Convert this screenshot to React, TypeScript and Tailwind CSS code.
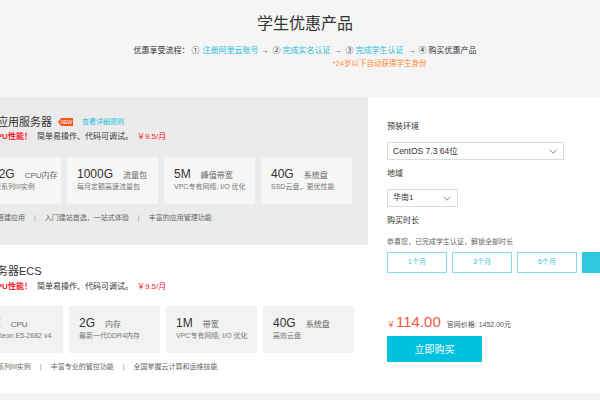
import React from "react";

const Chevron = () => (
  <svg width="8" height="5" viewBox="0 0 8 5" className="shrink-0">
    <polyline points="0.5,0.8 4,4.2 7.5,0.8" fill="none" stroke="#777" strokeWidth="0.9" />
  </svg>
);

type Spec = { big: string; label: string; sub: string; pl?: string };

const SpecCard = ({ s, bg }: { s: Spec; bg: string }) => (
  <div className={`w-[91px] h-[47px] shrink-0 pt-[10px] ${s.pl ?? "pl-[10px]"} ${bg}`}>
    <div className="flex items-baseline h-[14px] whitespace-nowrap">
      <span className="text-[12px] leading-[14px] text-[#333]">{s.big}</span>
      <span className="ml-[10px] text-[8px] leading-[10px] text-[#666]">{s.label}</span>
    </div>
    <div className="mt-[1px] text-[7px] leading-[9px] text-[#777] whitespace-nowrap">{s.sub}</div>
  </div>
);

const Footer = ({ items, pl }: { items: string[]; pl: string }) => (
  <div className={`flex items-center text-[7px] leading-[10px] text-[#666] whitespace-nowrap ${pl}`}>
    {items.map((t, i) => (
      <React.Fragment key={i}>
        {i > 0 && <span className="mx-[9px] text-[#999]">|</span>}
        <span>{t}</span>
      </React.Fragment>
    ))}
  </div>
);

export default function App() {
  const topSpecs: Spec[] = [
    { big: "1核2G", label: "CPU内存", sub: "共享型系列III实例" },
    { big: "1000G", label: "流量包", sub: "每月定额高速流量包" },
    { big: "5M", label: "峰值带宽", sub: "VPC专有网络, I/O 优化" },
    { big: "40G", label: "系统盘", sub: "SSD云盘，更优性能" },
  ];
  const botSpecs: Spec[] = [
    { big: "1核", label: "CPU", sub: "Intel Xeon E5-2682 v4" },
    { big: "2G", label: "内存", sub: "最新一代DDR4内存" },
    { big: "1M", label: "带宽", sub: "VPC专有网络, I/O 优化" },
    { big: "40G", label: "系统盘", sub: "高效云盘" },
  ];

  return (
    <div className="w-[600px] h-[400px] overflow-hidden bg-[#f5f5f5] font-['Liberation_Sans','Noto_Sans_CJK_SC',sans-serif]">
      {/* header */}
      <header className="h-[97px] flex flex-col items-center pl-[10px]">
        <h1 className="mt-[14px] text-[16px] leading-[20px] text-[#333] font-normal">学生优惠产品</h1>
        <div className="mt-[12px] flex items-center text-[8px] leading-[10px] text-[#333] whitespace-nowrap">
          <span>优惠享受流程：</span>
          <span className="ml-[2px] w-[8px] text-center">①</span>
          <span className="ml-[3px] text-[#1dbfdc]">注册阿里云账号</span>
          <span className="ml-[1px] w-[10px] text-center">→</span>
          <span className="ml-[3px] w-[8px] text-center">②</span>
          <span className="ml-[2px] text-[#1dbfdc]">完成实名认证</span>
          <span className="ml-[2px] w-[10px] text-center">→</span>
          <span className="ml-[3px] w-[8px] text-center">③</span>
          <span className="ml-[2px] relative text-[#1dbfdc]">
            完成学生认证
            <span className="absolute left-1/2 -translate-x-1/2 top-[13px] text-[7.5px] leading-[10px] text-[#ff8b2e]">
              *24岁以下自动获得学生身份
            </span>
          </span>
          <span className="ml-[3px] w-[10px] text-center">→</span>
          <span className="ml-[2px] w-[8px] text-center">④</span>
          <span className="ml-[2px]">购买优惠产品</span>
        </div>
      </header>

      <div className="flex h-[296px]">
        {/* left column */}
        <div className="w-[368px] flex flex-col overflow-hidden">
          {/* light server */}
          <section className="h-[148px] bg-[#ebebeb] overflow-hidden">
            <div className="ml-[-30px] w-[420px]">
              <div className="pt-[18px] pl-[5px] flex items-center h-[32px] whitespace-nowrap">
                <span className="text-[11px] leading-[14px] text-[#333]">轻量应用服务器</span>
                <span className="ml-[6px] h-[8px] w-[15px] bg-[#f4541f] text-white text-[5px] leading-[8px] text-center pl-[2px] [clip-path:polygon(3px_0,100%_0,100%_100%,3px_100%,0_50%)]">
                  NEW
                </span>
                <span className="ml-[9px] text-[7px] leading-[10px] text-[#1dbfdc]">查看详细规则</span>
              </div>
              <div className="mt-[3px] pl-[5px] flex items-center text-[8px] leading-[10px] whitespace-nowrap">
                <span className="font-bold text-[#f5222d]">超高CPU性能！</span>
                <span className="ml-[5px] text-[#333]">简单易操作、代码可调试。</span>
                <span className="ml-[4px] text-[#f5222d]">￥9.5/月</span>
              </div>
              <div className="mt-[15px] flex gap-[6px]">
                {topSpecs.map((s, i) => (
                  <SpecCard key={i} s={s} bg="bg-[#f6f6f6]" />
                ))}
              </div>
              <div className="mt-[9px]">
                <Footer items={["快速搭建应用", "入门建站首选，一站式体验", "丰富的应用管理功能"]} pl="pl-[13px]" />
              </div>
            </div>
          </section>

          {/* ECS */}
          <section className="h-[148px] bg-white overflow-hidden">
            <div className="ml-[-28px] w-[420px]">
              <div className="pt-[19px] pl-[3px] text-[11px] leading-[14px] text-[#333] whitespace-nowrap">云服务器ECS</div>
              <div className="mt-[4px] pl-[3px] flex items-center text-[8px] leading-[10px] whitespace-nowrap">
                <span className="font-bold text-[#f5222d]">超高CPU性能！</span>
                <span className="ml-[5px] text-[#333]">简单易操作、代码可调试。</span>
                <span className="ml-[4px] text-[#f5222d]">￥9.5/月</span>
              </div>
              <div className="mt-[14px] flex gap-[6px]">
                {botSpecs.map((s, i) => (
                  <SpecCard key={i} s={s} bg="bg-[#f2f2f2]" />
                ))}
              </div>
              <div className="mt-[9px]">
                <Footer items={["共享型系列III实例", "丰富专业的管控功能", "全国掌握云计算和运维技能"]} pl="pl-[4px]" />
              </div>
            </div>
          </section>
        </div>

        {/* right panel */}
        <aside className="flex-1 bg-white pl-[19px] overflow-hidden">
          <div className="pt-[25px] text-[8px] leading-[10px] text-[#333]">预装环境</div>
          <div className="mt-[10px] w-[177px] h-[18px] border border-[#dcdcdc] flex items-center justify-between pl-[5px] pr-[6px]">
            <span className="text-[8.5px] leading-[10px] text-[#333]">CentOS 7.3 64位</span>
            <Chevron />
          </div>
          <div className="mt-[9px] text-[8px] leading-[10px] text-[#333]">地域</div>
          <div className="mt-[10px] w-[71px] h-[18px] border border-[#dcdcdc] flex items-center justify-between pl-[5px] pr-[6px]">
            <span className="text-[8px] leading-[10px] text-[#333]">华南1</span>
            <Chevron />
          </div>
          <div className="mt-[9px] text-[8px] leading-[10px] text-[#333]">购买时长</div>
          <div className="mt-[11px] text-[7px] leading-[9px] text-[#666] whitespace-nowrap">恭喜您，已完成学生认证，解锁全部时长</div>
          <div className="mt-[6px] flex gap-[5px]">
            {["1个月", "3个月", "6个月"].map((t) => (
              <div
                key={t}
                className="w-[60px] h-[21px] shrink-0 border border-[#86dcec] flex items-center justify-center text-[7px] text-[#3cc6df]"
              >
                {t}
              </div>
            ))}
            <div className="w-[60px] h-[21px] shrink-0 bg-[#2ec8e0] flex items-center justify-center text-[7px] text-white">
              1年
            </div>
          </div>
          <div className="mt-[40px] h-[18px] flex items-baseline whitespace-nowrap">
            <span className="text-[8px] text-[#f5573c]">￥</span>
            <span className="ml-[1px] text-[15px] leading-[18px] text-[#f5573c]">114.00</span>
            <span className="ml-[6px] text-[7px] text-[#555]">官网价格: 1452.00元</span>
          </div>
          <button className="mt-[5px] w-[95px] h-[26px] bg-[#00c1de] text-white text-[10px] flex items-center justify-center">
            立即购买
          </button>
        </aside>
      </div>
    </div>
  );
}
